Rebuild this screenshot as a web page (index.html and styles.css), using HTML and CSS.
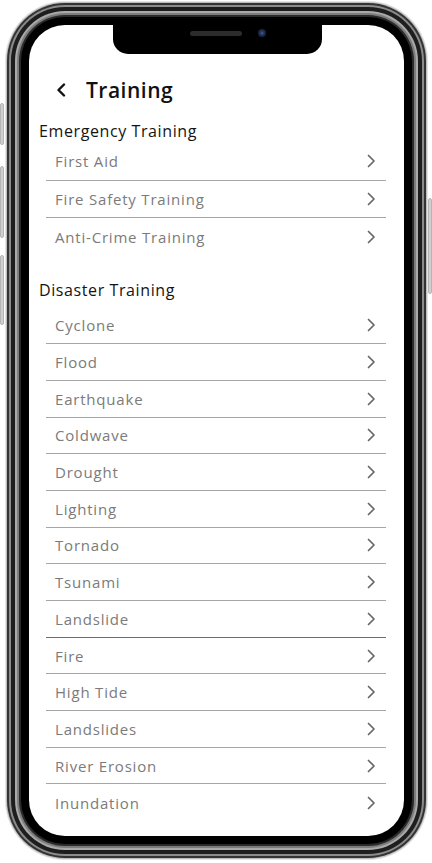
FILE: index.html
```html
<!DOCTYPE html>
<html lang="en">
<head>
<meta charset="utf-8">
<title>Training</title>
<link rel="stylesheet" href="styles.css">
</head>
<body>
<div class="phone">
  <span class="side-btn btn-l1"></span>
  <span class="side-btn btn-l2"></span>
  <span class="side-btn btn-l3"></span>
  <span class="side-btn btn-r1"></span>
  <div class="screen">
    <div class="notch"><span class="speaker"></span><span class="camera"></span></div>
    <header class="topbar">
      <svg class="back" viewBox="0 0 10 14" width="10" height="14"><path d="M8 1.5 L2.5 7 L8 12.5" fill="none" stroke="#111" stroke-width="2.4" stroke-linecap="round" stroke-linejoin="round"/></svg>
      <h1 class="title">Training</h1>
    </header>

    <section class="group group-em">
      <h2 class="group-title">Emergency Training</h2>
      <ul class="list list-em">
        <li class="row"><span>First Aid</span><svg class="chev" viewBox="0 0 9 14" width="9" height="14"><path d="M1.5 1.5 L7 7 L1.5 12.5" fill="none" stroke="#666" stroke-width="1.7" stroke-linecap="round" stroke-linejoin="round"/></svg></li>
        <li class="row"><span>Fire Safety Training</span><svg class="chev" viewBox="0 0 9 14" width="9" height="14"><path d="M1.5 1.5 L7 7 L1.5 12.5" fill="none" stroke="#666" stroke-width="1.7" stroke-linecap="round" stroke-linejoin="round"/></svg></li>
        <li class="row last"><span>Anti-Crime Training</span><svg class="chev" viewBox="0 0 9 14" width="9" height="14"><path d="M1.5 1.5 L7 7 L1.5 12.5" fill="none" stroke="#666" stroke-width="1.7" stroke-linecap="round" stroke-linejoin="round"/></svg></li>
      </ul>
    </section>

    <section class="group group-dis">
      <h2 class="group-title">Disaster Training</h2>
      <ul class="list list-dis">
        <li class="row"><span>Cyclone</span><svg class="chev" viewBox="0 0 9 14" width="9" height="14"><path d="M1.5 1.5 L7 7 L1.5 12.5" fill="none" stroke="#666" stroke-width="1.7" stroke-linecap="round" stroke-linejoin="round"/></svg></li>
        <li class="row"><span>Flood</span><svg class="chev" viewBox="0 0 9 14" width="9" height="14"><path d="M1.5 1.5 L7 7 L1.5 12.5" fill="none" stroke="#666" stroke-width="1.7" stroke-linecap="round" stroke-linejoin="round"/></svg></li>
        <li class="row"><span>Earthquake</span><svg class="chev" viewBox="0 0 9 14" width="9" height="14"><path d="M1.5 1.5 L7 7 L1.5 12.5" fill="none" stroke="#666" stroke-width="1.7" stroke-linecap="round" stroke-linejoin="round"/></svg></li>
        <li class="row"><span>Coldwave</span><svg class="chev" viewBox="0 0 9 14" width="9" height="14"><path d="M1.5 1.5 L7 7 L1.5 12.5" fill="none" stroke="#666" stroke-width="1.7" stroke-linecap="round" stroke-linejoin="round"/></svg></li>
        <li class="row"><span>Drought</span><svg class="chev" viewBox="0 0 9 14" width="9" height="14"><path d="M1.5 1.5 L7 7 L1.5 12.5" fill="none" stroke="#666" stroke-width="1.7" stroke-linecap="round" stroke-linejoin="round"/></svg></li>
        <li class="row"><span>Lighting</span><svg class="chev" viewBox="0 0 9 14" width="9" height="14"><path d="M1.5 1.5 L7 7 L1.5 12.5" fill="none" stroke="#666" stroke-width="1.7" stroke-linecap="round" stroke-linejoin="round"/></svg></li>
        <li class="row"><span>Tornado</span><svg class="chev" viewBox="0 0 9 14" width="9" height="14"><path d="M1.5 1.5 L7 7 L1.5 12.5" fill="none" stroke="#666" stroke-width="1.7" stroke-linecap="round" stroke-linejoin="round"/></svg></li>
        <li class="row"><span>Tsunami</span><svg class="chev" viewBox="0 0 9 14" width="9" height="14"><path d="M1.5 1.5 L7 7 L1.5 12.5" fill="none" stroke="#666" stroke-width="1.7" stroke-linecap="round" stroke-linejoin="round"/></svg></li>
        <li class="row dark"><span>Landslide</span><svg class="chev" viewBox="0 0 9 14" width="9" height="14"><path d="M1.5 1.5 L7 7 L1.5 12.5" fill="none" stroke="#666" stroke-width="1.7" stroke-linecap="round" stroke-linejoin="round"/></svg></li>
        <li class="row"><span>Fire</span><svg class="chev" viewBox="0 0 9 14" width="9" height="14"><path d="M1.5 1.5 L7 7 L1.5 12.5" fill="none" stroke="#666" stroke-width="1.7" stroke-linecap="round" stroke-linejoin="round"/></svg></li>
        <li class="row"><span>High Tide</span><svg class="chev" viewBox="0 0 9 14" width="9" height="14"><path d="M1.5 1.5 L7 7 L1.5 12.5" fill="none" stroke="#666" stroke-width="1.7" stroke-linecap="round" stroke-linejoin="round"/></svg></li>
        <li class="row"><span>Landslides</span><svg class="chev" viewBox="0 0 9 14" width="9" height="14"><path d="M1.5 1.5 L7 7 L1.5 12.5" fill="none" stroke="#666" stroke-width="1.7" stroke-linecap="round" stroke-linejoin="round"/></svg></li>
        <li class="row"><span>River Erosion</span><svg class="chev" viewBox="0 0 9 14" width="9" height="14"><path d="M1.5 1.5 L7 7 L1.5 12.5" fill="none" stroke="#666" stroke-width="1.7" stroke-linecap="round" stroke-linejoin="round"/></svg></li>
        <li class="row last"><span>Inundation</span><svg class="chev" viewBox="0 0 9 14" width="9" height="14"><path d="M1.5 1.5 L7 7 L1.5 12.5" fill="none" stroke="#666" stroke-width="1.7" stroke-linecap="round" stroke-linejoin="round"/></svg></li>
      </ul>
    </section>
  </div>
</div>
</body>
</html>
```
FILE: styles.css
```css
* { box-sizing: border-box; }

html, body {
  margin: 0;
  padding: 0;
  background: #ffffff;
}

body {
  width: 432px;
  height: 863px;
  overflow: hidden;
  font-family: "Open Sans", "DejaVu Sans", sans-serif;
}

.phone {
  position: relative;
  width: 432px;
  height: 863px;
  padding: 25px 28px 27px 29px;
}

.side-btn {
  position: absolute;
  width: 4px;
  background: #cfcfcf;
  border: 1px solid #b5b5b5;
  border-radius: 2px;
}
.btn-l1 { left: 0; top: 103px; height: 42px; }
.btn-l2 { left: 0; top: 166px; height: 72px; }
.btn-l3 { left: 0; top: 255px; height: 70px; }
.btn-r1 { right: 0; top: 198px; height: 96px; }

.screen {
  position: relative;
  height: 811px;
  padding-top: 52px;
  background: #ffffff;
  border-radius: 36px;
  box-shadow:
    0 0 0 8px #000000,
    0 0 0 10px #2a2a2a,
    0 0 0 12px #7d7d7d,
    0 0 0 14px #a9a9a9,
    0 0 0 18px #1e1e1e,
    0 0 0 20px #8b8b8b,
    0 0 0 22px #333333,
    0 0 0 23px #bdbdbd,
    0 0 0 24px #e4e4e4;
}

.notch {
  position: absolute;
  left: 84px;
  top: 0;
  width: 209px;
  height: 29px;
  background: #000;
  border-radius: 0 0 15px 15px;
}

.speaker {
  position: absolute;
  left: 77px;
  top: 6px;
  width: 52px;
  height: 5px;
  border-radius: 3px;
  background: #2c2c2c;
}

.camera {
  position: absolute;
  left: 145px;
  top: 4px;
  width: 8px;
  height: 8px;
  border-radius: 50%;
  background: radial-gradient(circle at 50% 50%, #3a5f9c 0, #1d2c4a 45%, #141a26 100%);
}

.topbar {
  display: flex;
  align-items: center;
  height: 26px;
  padding-left: 27px;
}

.back {
  display: block;
  flex: none;
}

.title {
  margin: 0 0 0 20px;
  font-size: 21px;
  font-weight: 600;
  letter-spacing: 0.5px;
  line-height: 26px;
  color: #111111;
}

.group-title {
  margin: 0;
  padding-left: 10px;
  font-size: 16px;
  font-weight: 500;
  letter-spacing: 0.6px;
  line-height: 20px;
  color: #141414;
}

.group-em { margin-top: 18px; }
.group-dis { margin-top: 24px; }

.list {
  list-style: none;
  margin: 0 18px 0 17px;
  padding: 0;
}
.list-em { margin-top: 2px; }
.list-dis { margin-top: 8px; }

.row {
  display: flex;
  align-items: center;
  justify-content: space-between;
  padding: 0 10px 0 9px;
  border-bottom: 1px solid #a6a6a6;
  font-size: 15px;
  letter-spacing: 0.8px;
  color: #7b7b7b;
}
.list-em .row { height: 37.5px; }
.list-dis .row { height: 36.7px; }
.row.dark { border-bottom-color: #6e6e6e; }
.row.last { border-bottom: none; }

.chev { display: block; flex: none; }
```
